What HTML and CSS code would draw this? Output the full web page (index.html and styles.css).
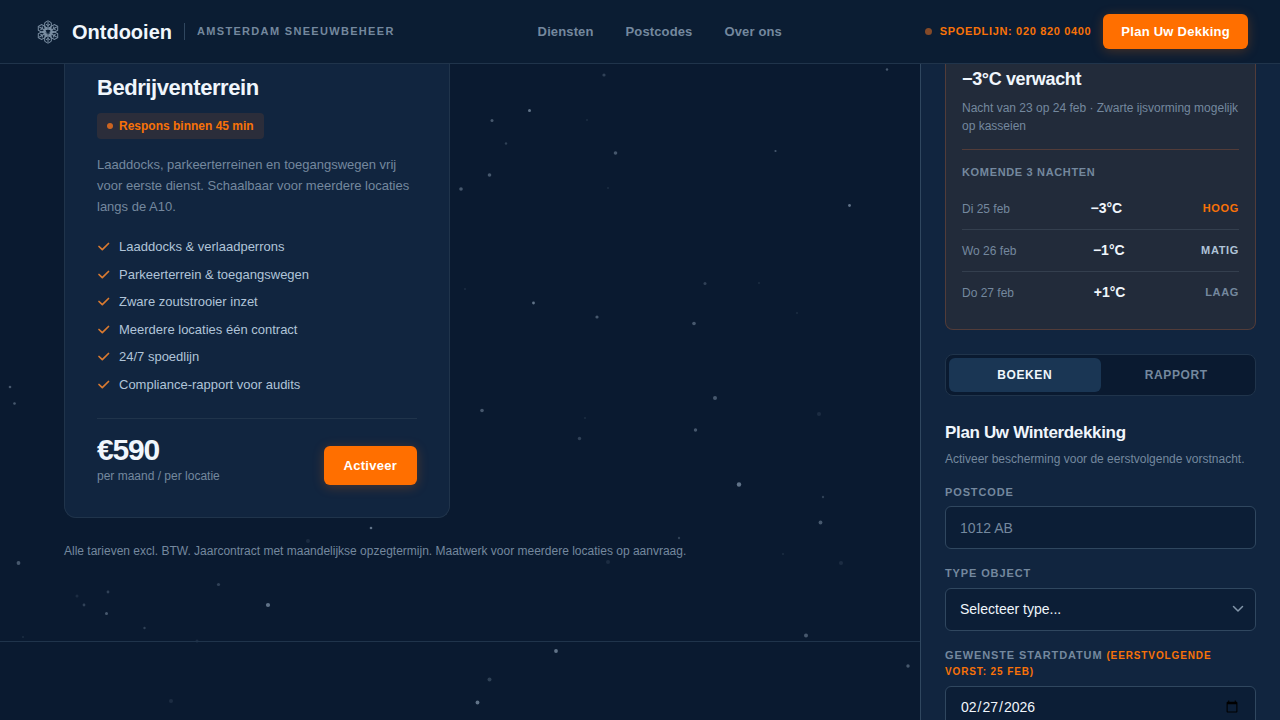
FILE: index.html
```html
<!DOCTYPE html>
<html lang="nl">
<head>
<meta charset="utf-8">
<meta name="viewport" content="width=device-width, initial-scale=1">
<title>Ontdooien – Amsterdam Sneeuwbeheer</title>
<link rel="stylesheet" href="styles.css">
</head>
<body>
<svg class="snow" aria-hidden="true">
  <g class="far">
    <circle cx="587" cy="120" r="1"/><circle cx="608" cy="188" r="1"/><circle cx="759" cy="283" r="1"/><circle cx="465" cy="289" r="1"/><circle cx="797" cy="313" r="1"/><circle cx="585" cy="418" r="1"/><circle cx="819" cy="414" r="2"/><circle cx="608" cy="562" r="2"/><circle cx="783" cy="554" r="1"/><circle cx="841" cy="563" r="2"/><circle cx="308" cy="541" r="2"/><circle cx="77" cy="596" r="1.5"/><circle cx="23" cy="637" r="1"/><circle cx="197" cy="641" r="1.5"/><circle cx="171" cy="701" r="2"/>
  </g>
  <g class="mid">
    <circle cx="604" cy="75" r="1.6"/><circle cx="506" cy="143.500" r="1.200"/><circle cx="579.500" cy="438.500" r="1.700"/><circle cx="823" cy="497" r="1.200"/><circle cx="679" cy="538" r="1.200"/><circle cx="218.500" cy="584.500" r="1.600"/><circle cx="108" cy="592" r="1.400"/><circle cx="84" cy="605" r="1.400"/><circle cx="144.500" cy="628" r="1.200"/><circle cx="489.500" cy="679.500" r="2"/><circle cx="705" cy="283.500" r="1.500"/>
  </g>
  <g class="near">
    <circle cx="887" cy="69.500" r="1.200"/><circle cx="492" cy="120.500" r="1.500"/><circle cx="615.500" cy="153" r="1.800"/><circle cx="775.500" cy="151" r="1.100"/><circle cx="489.500" cy="175" r="1.800"/><circle cx="461" cy="189" r="1.800"/><circle cx="597" cy="317" r="1.600"/><circle cx="694" cy="323.500" r="1.800"/><circle cx="715" cy="398" r="2"/><circle cx="482" cy="410.500" r="1.800"/><circle cx="695.500" cy="430" r="1.700"/><circle cx="820.500" cy="522.500" r="1.900"/><circle cx="806" cy="635.500" r="2"/><circle cx="908" cy="666" r="1.700"/><circle cx="18.500" cy="563" r="1.900"/><circle cx="106.500" cy="613.500" r="1.500"/><circle cx="10" cy="387" r="1.300"/><circle cx="14.500" cy="403.500" r="1.300"/>
  </g>
  <g class="front">
    <circle cx="529.500" cy="110.500" r="1.500"/><circle cx="849.500" cy="205.500" r="1.400"/><circle cx="533.500" cy="303" r="1.400"/><circle cx="739" cy="484.500" r="2.200"/><circle cx="556" cy="651" r="1.900"/><circle cx="477.500" cy="702.500" r="1.900"/><circle cx="268" cy="605" r="2.100"/><circle cx="371" cy="528" r="1.300"/>
  </g>
</svg>

<header class="topbar">
  <a class="brand" href="#">
    <svg class="brand-mark" viewBox="0 0 32 32" aria-hidden="true">
      <defs>
        <g id="arm">
          <path d="M16 13V6M16 4.800l3.300 1.900v3.800L16 12.400l-3.300-1.900V6.700zM16 9.500l-2-1.200M16 9.500l2-1.200M12.700 10.500L16 16M16 13.500l-2.500-1.500M16 13.500l2.500-1.500"/>
        </g>
      </defs>
      <use href="#arm"/>
      <use href="#arm" transform="rotate(60 16 16)"/>
      <use href="#arm" transform="rotate(120 16 16)"/>
      <use href="#arm" transform="rotate(180 16 16)"/>
      <use href="#arm" transform="rotate(240 16 16)"/>
      <use href="#arm" transform="rotate(300 16 16)"/>
      <path class="brand-core" d="M13.500 14h5L16 18.500z"/>
    </svg>
    <span class="brand-name">Ontdooien</span>
    <span class="brand-sub">Amsterdam Sneeuwbeheer</span>
  </a>
  <nav class="nav" aria-label="Hoofdmenu">
    <a href="#">Diensten</a>
    <a href="#">Postcodes</a>
    <a href="#">Over ons</a>
  </nav>
  <div class="actions">
    <a class="hotline" href="tel:0208200400"><span class="dot"></span>Spoedlijn: 020 820 0400</a>
    <button class="btn btn-small" type="button">Plan Uw Dekking</button>
  </div>
</header>

<div class="layout">
  <main>
    <section class="services">
      <div class="cards">
        <article class="card">
          <h2>Bedrijventerrein</h2>
          <p class="badge"><span class="dot"></span>Respons binnen 45 min</p>
          <p class="desc">Laaddocks, parkeerterreinen en toegangswegen vrij voor eerste dienst. Schaalbaar voor meerdere locaties langs de A10.</p>
          <ul class="features">
            <li><svg class="check" viewBox="0 0 14 14" aria-hidden="true"><path d="M2 6.500l3.300 3.200L11.500 3.500"/></svg>Laaddocks &amp; verlaadperrons</li>
            <li><svg class="check" viewBox="0 0 14 14" aria-hidden="true"><path d="M2 6.500l3.300 3.200L11.500 3.500"/></svg>Parkeerterrein &amp; toegangswegen</li>
            <li><svg class="check" viewBox="0 0 14 14" aria-hidden="true"><path d="M2 6.500l3.300 3.200L11.500 3.500"/></svg>Zware zoutstrooier inzet</li>
            <li><svg class="check" viewBox="0 0 14 14" aria-hidden="true"><path d="M2 6.500l3.300 3.200L11.500 3.500"/></svg>Meerdere locaties één contract</li>
            <li><svg class="check" viewBox="0 0 14 14" aria-hidden="true"><path d="M2 6.500l3.300 3.200L11.500 3.500"/></svg>24/7 spoedlijn</li>
            <li><svg class="check" viewBox="0 0 14 14" aria-hidden="true"><path d="M2 6.500l3.300 3.200L11.500 3.500"/></svg>Compliance-rapport voor audits</li>
          </ul>
          <div class="card-foot">
            <div>
              <div class="price">€590</div>
              <div class="per">per maand / per locatie</div>
            </div>
            <button class="btn" type="button">Activeer</button>
          </div>
        </article>
      </div>
      <p class="note">Alle tarieven excl. BTW. Jaarcontract met maandelijkse opzegtermijn. Maatwerk voor meerdere locaties op aanvraag.</p>
    </section>
  </main>

  <aside class="side">
    <section class="alert">
      <h2>−3°C verwacht</h2>
      <p class="alert-text">Nacht van 23 op 24 feb · Zwarte ijsvorming mogelijk op kasseien</p>
      <h3>Komende 3 nachten</h3>
      <ul class="nights">
        <li><span class="day">Di 25 feb</span><span class="temp">−3°C</span><span class="risk high">Hoog</span></li>
        <li><span class="day">Wo 26 feb</span><span class="temp">−1°C</span><span class="risk medium">Matig</span></li>
        <li><span class="day">Do 27 feb</span><span class="temp">+1°C</span><span class="risk">Laag</span></li>
      </ul>
    </section>

    <div class="tabs" role="tablist">
      <button type="button" role="tab" aria-selected="true">Boeken</button>
      <button type="button" role="tab" aria-selected="false">Rapport</button>
    </div>

    <form class="form">
      <h2>Plan Uw Winterdekking</h2>
      <p class="form-intro">Activeer bescherming voor de eerstvolgende vorstnacht.</p>
      <div class="field">
        <label for="postcode">Postcode</label>
        <input id="postcode" type="text" placeholder="1012 AB">
      </div>
      <div class="field">
        <label for="type">Type object</label>
        <div class="select">
          <select id="type"><option>Selecteer type...</option></select>
          <svg class="chevron" viewBox="0 0 12 12" aria-hidden="true"><path d="M1.500 3.500L6 8l4.500-4.500"/></svg>
        </div>
      </div>
      <div class="field">
        <label for="start">Gewenste startdatum <span class="hint">(eerstvolgende vorst: 25 feb)</span></label>
        <input id="start" type="date" value="2026-02-27">
      </div>
    </form>
  </aside>
</div>
</body>
</html>
```

FILE: styles.css
```css
:root {
  --bg: #0a1a30;
  --bar: #0b1d33;
  --panel: #11253f;
  --line: #20344b;
  --line-strong: #30475f;
  --muted: #74889e;
  --soft: #b0c4d8;
  --text: #f0f6fc;
  --accent: #ff6f00;
}

* { box-sizing: border-box; }

html { scrollbar-width: none; }

body {
  margin: 0;
  height: 100vh;
  overflow: hidden;
  display: flex;
  flex-direction: column;
  background: var(--bg);
  color: var(--text);
  font: 14px/1.5 "Liberation Sans", Arial, sans-serif;
}

h2, h3, p, ul { margin: 0; padding: 0; }
ul { list-style: none; }
a { color: inherit; text-decoration: none; }
button, input, select { font: inherit; color: inherit; }

.snow {
  position: absolute;
  inset: 0;
  width: 100%;
  height: 100%;
  fill: #b8cce0;
  pointer-events: none;
}
.far { opacity: .1; }
.mid { opacity: .22; }
.near { opacity: .35; }
.front { opacity: .5; }

.topbar {
  position: relative;
  flex: none;
  height: 64px;
  padding: 0 32px;
  display: flex;
  align-items: center;
  justify-content: space-between;
  background: var(--bar);
  border-bottom: 1px solid var(--line);
}
.brand { display: flex; align-items: center; }
.brand-mark {
  width: 32px;
  height: 32px;
  margin-right: 8px;
  fill: none;
  stroke: #7b8fa3;
  stroke-width: 1;
}
.brand-core { fill: var(--bar); stroke: none; }
.brand-name { font-size: 20px; font-weight: 700; }
.brand-sub {
  margin-left: 12px;
  padding-left: 12px;
  border-left: 1px solid var(--line-strong);
  color: var(--muted);
  font-size: 11px;
  font-weight: 700;
  letter-spacing: .12em;
  text-transform: uppercase;
}
.nav {
  display: flex;
  gap: 32px;
  color: var(--muted);
  font-size: 13px;
  font-weight: 700;
  letter-spacing: .01em;
}
.actions { display: flex; align-items: center; gap: 12px; }
.hotline {
  display: flex;
  align-items: center;
  gap: 8px;
  color: #f87208;
  font-size: 11px;
  font-weight: 700;
  letter-spacing: .06em;
  text-transform: uppercase;
}
.dot {
  width: 7px;
  height: 7px;
  border-radius: 50%;
  background: #854a28;
}

.btn {
  padding: 10px 20px;
  border: 0;
  border-radius: 6px;
  background: var(--accent);
  color: #fff;
  font-size: 13px;
  font-weight: 700;
  letter-spacing: .02em;
  box-shadow: 0 2px 12px rgba(255, 111, 0, .25);
}
.btn-small { padding: 8px 18px; }

.layout {
  position: relative;
  flex: 1;
  min-height: 0;
  overflow: hidden;
  display: grid;
  grid-template-columns: minmax(0, 1fr) 360px;
}

.services {
  padding: 0 64px 80px;
  border-bottom: 1px solid var(--line);
}
.cards {
  display: grid;
  grid-template-columns: 1fr 1fr;
  gap: 20px;
}
.card {
  padding: 11px 32px 32px;
  border: 1px solid var(--line);
  border-top: 0;
  border-radius: 0 0 12px 12px;
  background: var(--panel);
}
.card h2 {
  margin-bottom: 12px;
  font-size: 22px;
  line-height: 26px;
  letter-spacing: -.02em;
}
.badge {
  width: fit-content;
  margin-bottom: 16px;
  padding: 4px 10px;
  display: flex;
  align-items: center;
  gap: 6px;
  border-radius: 4px;
  background: #2b2d3a;
  color: #f87208;
  font-size: 12px;
  font-weight: 700;
}
.badge .dot { width: 6px; height: 6px; background: #cc6420; }
.desc {
  margin-bottom: 20px;
  color: var(--muted);
  font-size: 13px;
  line-height: 1.6;
}
.features {
  margin-bottom: 24px;
  display: grid;
  gap: 8px;
  color: var(--soft);
  font-size: 13px;
}
.features li { display: flex; align-items: center; gap: 8px; }
.check, .chevron {
  fill: none;
  stroke-linecap: round;
  stroke-linejoin: round;
}
.check {
  width: 14px;
  height: 14px;
  stroke: #d97a30;
  stroke-width: 1.7;
}
.card-foot {
  padding-top: 16px;
  display: flex;
  align-items: flex-end;
  justify-content: space-between;
  border-top: 1px solid var(--line);
}
.price {
  margin-bottom: 2px;
  font-size: 30px;
  font-weight: 700;
  line-height: 1;
  letter-spacing: -.04em;
}
.per { color: var(--muted); font-size: 12px; }
.note {
  margin-top: 24px;
  color: var(--muted);
  font-size: 12px;
  line-height: 19px;
}

.side {
  padding: 0 24px 24px;
  border-left: 1px solid var(--line-strong);
  background: var(--panel);
}
.alert {
  margin-bottom: 24px;
  padding: 2px 16px 16px;
  border: 1px solid #523c39;
  border-top: 0;
  border-radius: 0 0 8px 8px;
  background: #222b3a;
}
.alert h2 { margin-bottom: 6px; font-size: 18px; letter-spacing: -.02em; }
.alert-text {
  padding-bottom: 14px;
  color: var(--muted);
  font-size: 12px;
}
.alert h3 {
  padding-top: 14px;
  margin-bottom: 8px;
  border-top: 1px solid #523c39;
  color: var(--muted);
  font-size: 11px;
  line-height: 16px;
  letter-spacing: .06em;
  text-transform: uppercase;
}
.nights li {
  padding: 10px 0;
  display: flex;
  align-items: center;
  justify-content: space-between;
  border-bottom: 1px solid #343f4e;
}
.nights li:last-child { border-bottom: 0; }
.day { color: var(--muted); font-size: 12px; }
.temp { font-weight: 700; }
.risk {
  color: var(--muted);
  font-size: 11px;
  font-weight: 700;
  letter-spacing: .06em;
  text-transform: uppercase;
}
.risk.high { color: #f87208; }
.risk.medium { color: var(--soft); }

.tabs {
  margin-bottom: 24px;
  padding: 3px;
  display: grid;
  grid-template-columns: 1fr 1fr;
  border: 1px solid var(--line);
  border-radius: 8px;
  background: var(--bg);
}
.tabs button {
  padding: 8px;
  border: 0;
  border-radius: 6px;
  background: none;
  color: var(--muted);
  font-size: 12px;
  font-weight: 700;
  letter-spacing: .05em;
  text-transform: uppercase;
}
.tabs [aria-selected="true"] { background: #1a3654; color: var(--text); }

.form h2 {
  margin-bottom: 4px;
  font-size: 17px;
  letter-spacing: -.02em;
}
.form-intro { margin-bottom: 16px; color: var(--muted); font-size: 12px; }
.field { margin-bottom: 16px; }
.field label {
  display: block;
  margin-bottom: 6px;
  color: var(--muted);
  font-size: 11px;
  font-weight: 700;
  letter-spacing: .08em;
  text-transform: uppercase;
}
.hint { color: #f87208; font-size: 10px; }
.field input, .field select {
  display: block;
  width: 100%;
  height: 43px;
  padding: 0 14px;
  border: 1px solid var(--line-strong);
  border-radius: 6px;
  background: #0c1e36;
}
.field select { appearance: none; }
.field input::placeholder { color: var(--muted); }
.select { position: relative; }
.chevron {
  position: absolute;
  top: 15px;
  right: 12px;
  width: 12px;
  height: 12px;
  stroke: #8295a9;
  stroke-width: 1.5;
}
```
